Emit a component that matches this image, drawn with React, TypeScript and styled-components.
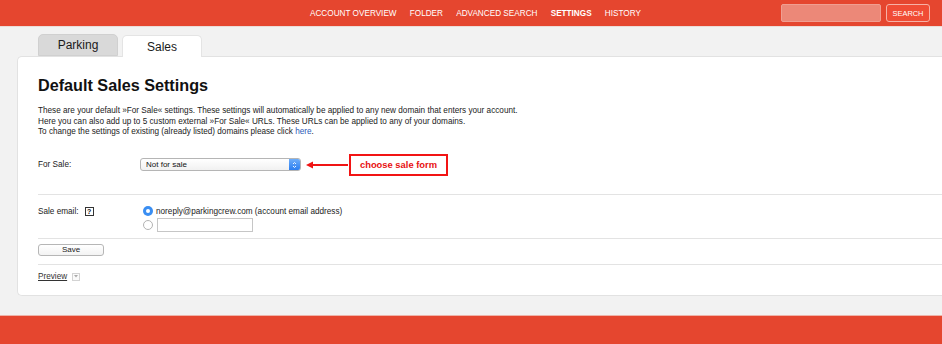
import React from "react";
import styled, { createGlobalStyle } from "styled-components";

const Global = createGlobalStyle`
  html, body { margin: 0; padding: 0; }
  body {
    font-family: "Liberation Sans", Arial, Helvetica, sans-serif;
    background: #f2f2f2;
    overflow: hidden;
  }
`;

const Page = styled.div`
  display: flex;
  flex-direction: column;
  height: 344px;
  width: 942px;
`;

const Header = styled.header`
  height: 27px;
  background: #e5462f;
  display: flex;
  align-items: center;
  padding: 0 12px 0 310px;
  box-sizing: border-box;
  border-bottom: 1px solid #ecdcd8;
  flex: none;
`;

const Nav = styled.nav`
  display: flex;
  gap: 13.2px;
`;

const NavItem = styled.a<{ $active?: boolean }>`
  color: #fff;
  font-size: 8.2px;
  text-transform: uppercase;
  text-decoration: none;
  font-weight: ${(p) => (p.$active ? 700 : 400)};
`;

const SearchGroup = styled.div`
  margin-left: auto;
  display: flex;
  gap: 5px;
  align-items: center;
`;

const SearchInput = styled.div`
  width: 100px;
  height: 18px;
  box-sizing: border-box;
  background: #ec8878;
  border: 1px solid #f09e91;
  border-radius: 2px;
`;

const SearchButton = styled.button`
  width: 44px;
  height: 18px;
  box-sizing: border-box;
  background: #f04c35;
  border: 1px solid #f6b1a6;
  border-radius: 3px;
  color: #fff;
  font-family: inherit;
  font-size: 7.4px;
  padding: 0;
`;

const Main = styled.main`
  flex: 1;
  padding: 7px 0 0 0;
  background: #f2f2f2;
`;

const Tabs = styled.div`
  display: flex;
  align-items: flex-end;
  gap: 4px;
  margin-left: 38px;
  height: 22px;
`;

const Tab = styled.div<{ $active?: boolean }>`
  position: relative;
  z-index: 1;
  width: 80px;
  height: 22px;
  box-sizing: border-box;
  margin-bottom: ${(p) => (p.$active ? "-1px" : "0")};
  display: flex;
  align-items: center;
  justify-content: center;
  font-size: 12px;
  color: #1a1a1a;
  border-radius: 5px 5px 0 0;
  background: ${(p) => (p.$active ? "#fff" : "#d9d9d9")};
  border: 1px solid ${(p) => (p.$active ? "#e4e4e4" : "#d0d0d0")};
  border-bottom: ${(p) => (p.$active ? "none" : "1px solid #d0d0d0")};
`;

const Panel = styled.section`
  margin-left: 17px;
  background: #fff;
  border: 1px solid #e2e2e2;
  border-right: none;
  border-radius: 5px 0 0 5px;
  padding-left: 20px;
`;

const Heading = styled.h1`
  margin: 18px 0 0 0;
  font-size: 16.2px;
  line-height: 20px;
  font-weight: 700;
  color: #111;
`;

const Intro = styled.p`
  margin: 11px 0 0 0;
  font-size: 8.2px;
  line-height: 10.5px;
  color: #222;
`;

const Link = styled.a`
  color: #2a5bb8;
  text-decoration: none;
`;

const Row = styled.div`
  display: flex;
  align-items: center;
  margin-top: 16px;
  height: 22px;
`;

const Label = styled.div`
  width: 102px;
  flex: none;
  display: flex;
  align-items: center;
  gap: 6px;
  font-size: 8.2px;
  color: #222;
`;

const SelectBox = styled.div`
  width: 161px;
  height: 13px;
  box-sizing: border-box;
  border: 1px solid #b5b5b5;
  border-radius: 3px;
  background: linear-gradient(#fff, #f1f1f1);
  display: flex;
  align-items: center;
  overflow: hidden;
`;

const SelectValue = styled.span`
  flex: 1;
  padding-left: 5px;
  font-size: 8px;
  color: #111;
`;

const Stepper = styled.span`
  width: 11px;
  height: 100%;
  background: linear-gradient(#6eaefa, #2b7ef0);
  display: flex;
  align-items: center;
  justify-content: center;
`;

const ArrowSvg = styled.svg`
  margin-left: 5px;
  flex: none;
`;

const Callout = styled.div`
  margin-left: 1px;
  width: 99px;
  height: 22px;
  box-sizing: border-box;
  border: 2px solid #f21414;
  display: flex;
  align-items: center;
  justify-content: center;
  font-size: 9.4px;
  font-weight: 700;
  color: #e81010;
`;

const Section = styled.div<{ $pt: number; $pb: number }>`
  border-top: 1px solid #e3e3e3;
  padding-top: ${(p) => p.$pt}px;
  padding-bottom: ${(p) => p.$pb}px;
`;

const FirstSection = styled(Section)`
  margin-top: 18px;
`;

const EmailGrid = styled.div`
  display: flex;
  align-items: flex-start;
`;

const EmailLabel = styled(Label)`
  height: 11px;
`;

const HelpIcon = styled.span`
  width: 9px;
  height: 9px;
  box-sizing: border-box;
  border: 1px solid #333;
  display: inline-flex;
  align-items: center;
  justify-content: center;
  font-size: 7px;
  font-weight: 700;
  color: #111;
  line-height: 1;
`;

const Options = styled.div`
  display: flex;
  flex-direction: column;
  gap: 1px;
`;

const Option = styled.label<{ $h: number }>`
  display: flex;
  align-items: center;
  height: ${(p) => p.$h}px;
  font-size: 8.2px;
  color: #222;
`;

const Radio = styled.span<{ $checked?: boolean }>`
  width: 10px;
  height: 10px;
  box-sizing: border-box;
  margin: 0 3px 0 3px;
  border-radius: 50%;
  flex: none;
  background: ${(p) => (p.$checked ? "#3a8ef2" : "#fff")};
  border: ${(p) => (p.$checked ? "none" : "1px solid #b3b3b3")};
  display: flex;
  align-items: center;
  justify-content: center;
  &::after {
    content: "";
    display: ${(p) => (p.$checked ? "block" : "none")};
    width: 4px;
    height: 4px;
    border-radius: 50%;
    background: #fff;
  }
`;

const TextInput = styled.span`
  width: 96px;
  height: 14px;
  box-sizing: border-box;
  border: 1px solid #c6c6c6;
  background: #fff;
  margin-left: 1px;
`;

const SaveButton = styled.button`
  display: flex;
  align-items: center;
  justify-content: center;
  width: 66px;
  height: 12px;
  box-sizing: border-box;
  border: 1px solid #b6b6b6;
  border-radius: 3px;
  background: linear-gradient(#fff, #f3f3f3);
  font-family: inherit;
  font-size: 8px;
  color: #222;
  padding: 0;
`;

const PreviewRow = styled.div`
  display: flex;
  align-items: center;
  gap: 5px;
  height: 10px;
`;

const PreviewLink = styled.a`
  font-size: 8.2px;
  color: #333;
  text-decoration: underline;
`;

const MiniDrop = styled.span`
  width: 8px;
  height: 8px;
  box-sizing: border-box;
  border: 1px solid #d3d3d3;
  background: #fafafa;
  display: flex;
  align-items: center;
  justify-content: center;
`;

const Footer = styled.footer`
  height: 28px;
  flex: none;
  background: #e5462f;
  border-top: 1px solid #eeb3a9;
`;

export default function App() {
  return (
    <>
      <Global />
      <Page>
        <Header>
          <Nav>
            <NavItem>Account Overview</NavItem>
            <NavItem>Folder</NavItem>
            <NavItem>Advanced Search</NavItem>
            <NavItem $active>Settings</NavItem>
            <NavItem>History</NavItem>
          </Nav>
          <SearchGroup>
            <SearchInput />
            <SearchButton>SEARCH</SearchButton>
          </SearchGroup>
        </Header>
        <Main>
          <Tabs>
            <Tab>Parking</Tab>
            <Tab $active>Sales</Tab>
          </Tabs>
          <Panel>
            <Heading>Default Sales Settings</Heading>
            <Intro>
              These are your default »For Sale« settings. These settings will automatically be applied to any new domain that enters your account.
              <br />
              Here you can also add up to 5 custom external »For Sale« URLs. These URLs can be applied to any of your domains.
              <br />
              To change the settings of existing (already listed) domains please click <Link>here</Link>.
            </Intro>
            <Row>
              <Label>For Sale:</Label>
              <SelectBox>
                <SelectValue>Not for sale</SelectValue>
                <Stepper>
                  <svg width="5" height="8" viewBox="0 0 5 8">
                    <path d="M1 3 L2.5 1.5 L4 3 M1 5 L2.5 6.5 L4 5" stroke="#fff" strokeWidth="0.9" fill="none" />
                  </svg>
                </Stepper>
              </SelectBox>
              <ArrowSvg width="42" height="8" viewBox="0 0 42 8">
                <polygon points="0,4 7,0.5 7,7.5" fill="#f01414" />
                <rect x="6" y="3" width="36" height="2" fill="#f01414" />
              </ArrowSvg>
              <Callout>choose sale form</Callout>
            </Row>
            <FirstSection $pt={11} $pb={6}>
              <EmailGrid>
                <EmailLabel>
                  Sale email:
                  <HelpIcon>?</HelpIcon>
                </EmailLabel>
                <Options>
                  <Option $h={11}>
                    <Radio $checked />
                    noreply@parkingcrew.com (account email address)
                  </Option>
                  <Option $h={14}>
                    <Radio />
                    <TextInput />
                  </Option>
                </Options>
              </EmailGrid>
            </FirstSection>
            <Section $pt={5} $pb={8}>
              <SaveButton>Save</SaveButton>
            </Section>
            <Section $pt={7} $pb={13}>
              <PreviewRow>
                <PreviewLink>Preview</PreviewLink>
                <MiniDrop>
                  <svg width="4" height="3" viewBox="0 0 4 3">
                    <polygon points="0,0 4,0 2,2.5" fill="#aaa" />
                  </svg>
                </MiniDrop>
              </PreviewRow>
            </Section>
          </Panel>
        </Main>
        <Footer />
      </Page>
    </>
  );
}
